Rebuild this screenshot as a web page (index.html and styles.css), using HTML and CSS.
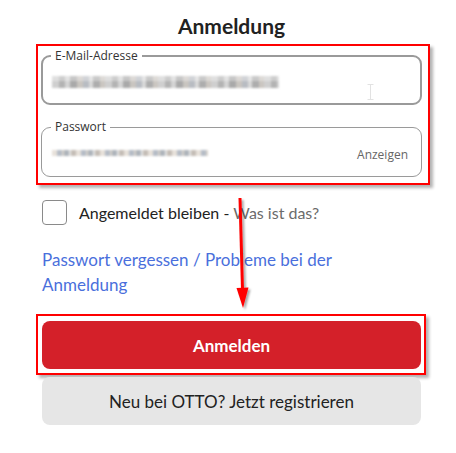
FILE: index.html
```html
<!DOCTYPE html>
<html lang="de">
<head>
<meta charset="utf-8">
<title>Anmeldung</title>
<link rel="stylesheet" href="styles.css">
</head>
<body>
<main class="page">
  <h1 class="title">Anmeldung</h1>

  <div class="mark mark-fields">
    <div class="field field-focus">
      <span class="field-label">E-Mail-Adresse</span>
      <span class="blur blur-email"></span>
      <svg class="ibeam" width="7" height="16" viewBox="0 0 7 16"><path d="M0.5 0.5h6M3.5 0.5v15M0.5 15.5h6" stroke="#e2e2e2" stroke-width="1" fill="none"/></svg>
    </div>
    <div class="field field-pw">
      <span class="field-label">Passwort</span>
      <span class="blur blur-pw"></span>
      <span class="show">Anzeigen</span>
    </div>
  </div>

  <label class="remember">
    <span class="checkbox"></span>
    <span class="remember-text">Angemeldet bleiben - <span class="muted">Was ist das?</span></span>
  </label>

  <a class="forgot" href="#">Passwort vergessen / Probleme bei der Anmeldung</a>

  <div class="mark mark-button">
    <button class="btn btn-primary">Anmelden</button>
  </div>
  <button class="btn btn-secondary">Neu bei OTTO? Jetzt registrieren</button>

  <svg class="arrow" width="24" height="120" viewBox="0 0 24 120">
    <defs>
      <filter id="sh" x="-50%" y="-10%" width="200%" height="120%">
        <feDropShadow dx="2" dy="2" stdDeviation="1.2" flood-color="#000" flood-opacity="0.35"/>
      </filter>
    </defs>
    <g filter="url(#sh)">
      <path d="M8 2 L10.5 94" stroke="#f00" stroke-width="3" fill="none"/>
      <path d="M4.5 92 L16.5 91.5 L11 112 Z" fill="#f00"/>
    </g>
  </svg>
</main>
</body>
</html>
```

FILE: styles.css
```css
* { box-sizing: border-box; }

html, body {
  margin: 0;
  padding: 0;
  background: #fff;
}

body {
  font-family: Lato, "Open Sans", Arial, sans-serif;
  color: #222;
}

.page {
  position: relative;
  width: 379px;
  margin-left: 42px;
  padding-top: 14px;
}

.title {
  margin: 0;
  font-size: 21px;
  line-height: 24px;
  font-weight: 700;
  text-align: center;
  color: #222;
}

.mark {
  border: 2px solid #f00;
  box-shadow: 3px 3px 3px rgba(0, 0, 0, 0.3);
}

.mark-fields {
  width: 394px;
  margin: 6px 0 0 -6px;
  padding: 9px 6px 6px 3px;
  display: flex;
  flex-direction: column;
  gap: 22px;
}

.field {
  position: relative;
  height: 50px;
  border: 1px solid #9a9a9a;
  border-radius: 9px;
  display: flex;
  align-items: center;
  padding: 0 13px 0 10px;
}

.field-focus {
  border: 2px solid #9a9a9a;
  padding-left: 9px;
}

.field-label {
  position: absolute;
  top: -9px;
  left: 8px;
  padding: 0 4px;
  background: #fff;
  font-family: "Open Sans", Arial, sans-serif;
  font-size: 12px;
  line-height: 15px;
  color: #333;
}

.field-pw .field-label {
  left: 9px;
}

.blur {
  display: block;
  filter: blur(0.8px);
}

.blur-email {
  width: 227px;
  height: 12px;
  margin-top: 4px;
  background:
    linear-gradient(180deg, rgba(255,255,255,0.35) 0 45%, rgba(255,255,255,0) 45%),
    repeating-linear-gradient(90deg,
      #cfcfcf 0 7px, #b3b3b3 7px 13px, #d4d4d4 13px 18px, #a9a9a9 18px 25px,
      #c9c5c0 25px 31px, #b8bcc2 31px 37px, #d9d9d9 37px 41px, #adadad 41px 48px,
      #cbc6c1 48px 53px);
}

.blur-pw {
  width: 156px;
  height: 6px;
  margin-top: 2px;
  background: repeating-linear-gradient(90deg,
    #e7e1da 0 5px, #b5bcc6 5px 10px, #d7d2cb 10px 12px, #aeb4bb 12px 17px,
    #e6e6e6 17px 19px, #c4bdb6 19px 24px);
}

.ibeam {
  position: absolute;
  left: 324px;
  top: 27px;
}

.show {
  margin-left: auto;
  font-family: "Open Sans", Arial, sans-serif;
  font-size: 12px;
  color: #666;
  padding-top: 4px;
}

.remember {
  display: flex;
  align-items: center;
  gap: 12px;
  margin-top: 15px;
  height: 25px;
}

.checkbox {
  width: 25px;
  height: 25px;
  border: 1px solid #8a8a8a;
  border-radius: 4px;
  flex: none;
}

.remember-text {
  font-size: 16px;
  line-height: 20px;
  color: #222;
}

.muted {
  color: #6b6b6b;
}

.forgot {
  display: block;
  margin-top: 22px;
  width: 310px;
  font-size: 17px;
  line-height: 25px;
  color: #4a6fdc;
  text-decoration: none;
}

.mark-button {
  width: 390px;
  margin: 17px 0 0 -6px;
  padding: 5px 3px 4px 4px;
}

.btn {
  display: block;
  width: 379px;
  height: 48px;
  border: none;
  border-radius: 8px;
  font-family: Lato, "Open Sans", Arial, sans-serif;
  font-size: 17px;
  cursor: pointer;
}

.btn-primary {
  background: #d42029;
  color: #fff;
  font-weight: 700;
}

.btn-secondary {
  margin-top: 2px;
  background: #e6e6e6;
  color: #222;
}

.arrow {
  position: absolute;
  left: 190px;
  top: 196px;
}
```
